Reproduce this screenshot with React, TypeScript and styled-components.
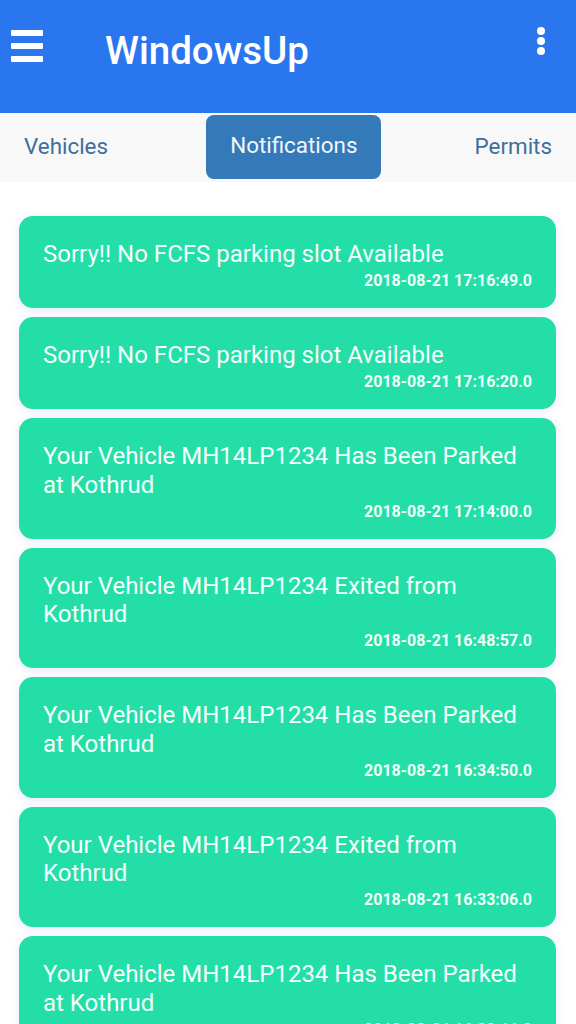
import styled, { createGlobalStyle } from 'styled-components';

const GlobalStyle = createGlobalStyle`
  html, body {
    margin: 0;
    padding: 0;
    background: #ffffff;
    font-family: Roboto, "Noto Sans", "Liberation Sans", sans-serif;
  }
  * { box-sizing: border-box; }
`;

const Screen = styled.div`
  width: 576px;
  height: 1024px;
  overflow: hidden;
  display: flex;
  flex-direction: column;
  background: #ffffff;
`;

const AppBar = styled.header`
  height: 113px;
  background: #2a76ef;
  display: flex;
  align-items: flex-start;
  padding: 30px 0 0 11px;
  flex-shrink: 0;
`;

const MenuButton = styled.div`
  width: 32px;
  display: flex;
  flex-direction: column;
  gap: 7px;
`;

const MenuBar = styled.span`
  display: block;
  height: 6px;
  background: #ffffff;
  border-radius: 1px;
`;

const Title = styled.h1`
  margin: -1px 0 0 62px;
  font-size: 38.5px;
  font-weight: 500;
  line-height: 44px;
  color: #ffffff;
  flex: 1;
`;

const MoreButton = styled.div`
  width: 8px;
  margin: -3px 31px 0 0;
  display: flex;
  flex-direction: column;
  gap: 2px;
`;

const Dot = styled.span`
  width: 8px;
  height: 8px;
  border-radius: 50%;
  background: #ffffff;
`;

const TabBar = styled.nav`
  height: 69px;
  background: #f8f8f8;
  display: flex;
  justify-content: space-between;
  align-items: center;
  padding: 0 24px 4px 24px;
  flex-shrink: 0;
`;

const Tab = styled.div<{ active?: boolean }>`
  font-size: 22.4px;
  line-height: 26px;
  color: ${({ active }) => (active ? '#f2f6fb' : '#3e6f9c')};
  background: ${({ active }) => (active ? '#3479b8' : 'transparent')};
  border-radius: 8px;
  height: ${({ active }) => (active ? '64px' : 'auto')};
  width: ${({ active }) => (active ? '175px' : 'auto')};
  padding-bottom: ${({ active }) => (active ? '4px' : '0')};
  display: flex;
  align-items: center;
  justify-content: center;
  margin-left: ${({ active }) => (active ? '5px' : '0')};
  margin-top: ${({ active }) => (active ? '3px' : '0')};
`;

const List = styled.main`
  flex: 1;
  padding: 34px 20px 0 19px;
  display: flex;
  flex-direction: column;
  gap: 9px;
`;

const Card = styled.div`
  background: #23dea6;
  border-radius: 14px;
  padding: 24px 24px 17px 24px;
  box-shadow: 0 2px 10px rgba(120, 130, 200, 0.18);
  flex-shrink: 0;
`;

const Message = styled.div`
  font-size: 24px;
  line-height: 28.5px;
  color: #f4fffb;
`;

const Stamp = styled.div`
  margin-top: 2.5px;
  text-align: right;
  font-size: 16px;
  font-weight: 700;
  line-height: 20px;
  color: #effff9;
`;

const notifications = [
  { text: 'Sorry!! No FCFS parking slot Available', time: '2018-08-21 17:16:49.0' },
  { text: 'Sorry!! No FCFS parking slot Available', time: '2018-08-21 17:16:20.0' },
  { text: 'Your Vehicle MH14LP1234 Has Been Parked at Kothrud', time: '2018-08-21 17:14:00.0' },
  { text: 'Your Vehicle MH14LP1234 Exited from Kothrud', time: '2018-08-21 16:48:57.0' },
  { text: 'Your Vehicle MH14LP1234 Has Been Parked at Kothrud', time: '2018-08-21 16:34:50.0' },
  { text: 'Your Vehicle MH14LP1234 Exited from Kothrud', time: '2018-08-21 16:33:06.0' },
  { text: 'Your Vehicle MH14LP1234 Has Been Parked at Kothrud', time: '2018-08-21 16:20:11.0' },
];

const App = () => {
  return (
    <>
      <GlobalStyle />
      <Screen>
        <AppBar>
          <MenuButton>
            <MenuBar />
            <MenuBar />
            <MenuBar />
          </MenuButton>
          <Title>WindowsUp</Title>
          <MoreButton>
            <Dot />
            <Dot />
            <Dot />
          </MoreButton>
        </AppBar>
        <TabBar>
          <Tab>Vehicles</Tab>
          <Tab active>Notifications</Tab>
          <Tab>Permits</Tab>
        </TabBar>
        <List>
          {notifications.map((n, i) => (
            <Card key={i}>
              <Message>{n.text}</Message>
              <Stamp>{n.time}</Stamp>
            </Card>
          ))}
        </List>
      </Screen>
    </>
  );
};

export default App;
